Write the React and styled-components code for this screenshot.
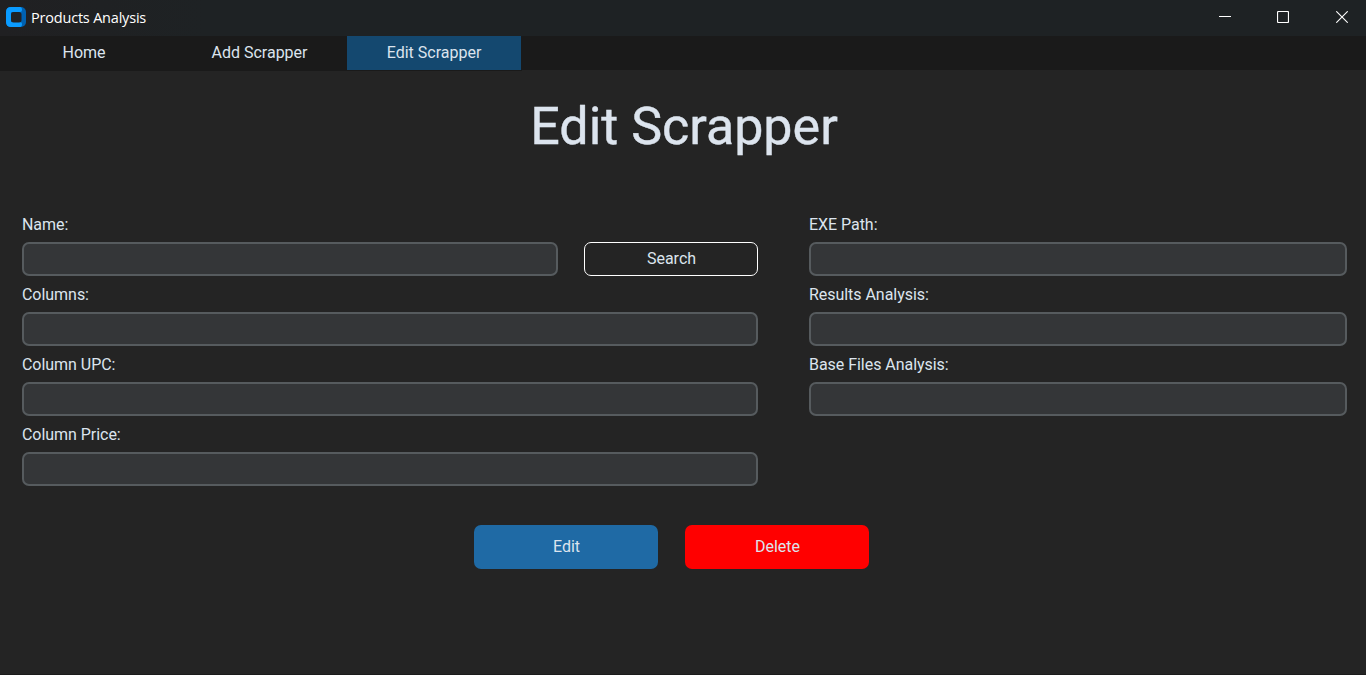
import React from 'react';
import styled, { createGlobalStyle } from 'styled-components';

const GlobalStyle = createGlobalStyle`
  * { box-sizing: border-box; }
  body { margin: 0; background: #242424; overflow: hidden; }
  button, input { font: inherit; margin: 0; padding: 0; }
`;

const Window = styled.div`
  display: flex;
  flex-direction: column;
  height: 675px;
  background: #242424;
  border-bottom: 1px solid #1b1b1b;
  color: #dce4ee;
  font: 16px/20px Roboto, sans-serif;
`;

const TitleBar = styled.header`
  display: flex;
  align-items: center;
  height: 36px;
  padding: 0 18px 2px 6px;
  background: linear-gradient(90deg, #202022, #1e2224 15%, #1e2224);
`;

const WindowTitle = styled.span`
  flex: 1;
  margin-left: 5px;
  padding-top: 1px;
  color: #fff;
  font-family: 'Open Sans', sans-serif;
  font-size: 14.5px;
  letter-spacing: -0.2px;
`;

const WindowControls = styled.div`
  display: flex;
  gap: 46px;
  svg { display: block; }
  svg:last-child { margin-left: 1px; }
`;

const Nav = styled.nav`
  display: flex;
  height: 34px;
  background: #1a1a1a;
`;

const TabGroup = styled.div`
  display: flex;
  height: 35px;
  width: 522px;
  background: #1a1a1a;
`;

const Tab = styled.button`
  width: ${(p) => p.$width}px;
  height: 34px;
  padding: ${(p) => p.$pad || '0'};
  border: 0;
  background: ${(p) => (p.$active ? '#14486f' : 'transparent')};
  color: #dce4ee;
`;

const Heading = styled.h1`
  margin: 27px 0 0;
  padding-left: 2px;
  font-size: 52px;
  line-height: 60px;
  font-weight: 400;
  text-align: center;
  -webkit-text-stroke: 0.4px #dce4ee;
`;

const Form = styled.form`
  display: grid;
  grid-template-columns: 736px 538px;
  column-gap: 51px;
  padding: 49px 0 0 22px;
`;

const Column = styled.div`
  display: flex;
  flex-direction: column;
`;

const Label = styled.label`
  display: flex;
  flex-direction: column;
  flex: 1;
`;

const Caption = styled.span`
  height: 36px;
  line-height: 38px;
  letter-spacing: -0.04px;
`;

const Input = styled.input`
  width: 100%;
  height: 34px;
  padding: 0 8px;
  border: 2px solid #565b5e;
  border-radius: 7px;
  background: #343638;
  color: #dce4ee;
  outline: 0;
`;

const SearchRow = styled.div`
  display: flex;
  align-items: flex-end;
  gap: 26px;
`;

const SearchButton = styled.button`
  width: 174px;
  height: 34px;
  padding: 0 0 1px 1px;
  border: 1px solid #fff;
  border-radius: 7px;
  background: transparent;
  color: #dce4ee;
`;

const Actions = styled.div`
  display: flex;
  gap: 27px;
  padding: 39px 0 0 474px;
`;

const ActionButton = styled.button`
  width: 184px;
  height: 44px;
  padding: 0 0 1px 1px;
  border: 0;
  border-radius: 7px;
  background: ${(p) => (p.$danger ? '#ff0000' : '#1f6aa5')};
  color: #dce4ee;
`;

function AppLogo() {
  return (
    <svg width="20" height="20" viewBox="0 0 20 20">
      <rect width="20" height="20" rx="5" fill="#0061b0" />
      <path d="M5 0H14Q16 0 16 3Q16 5 14 5H6Q5 5 5 6V14Q5 15 6 15H14Q16 15 16 17Q16 20 14 20H5Q0 20 0 15V5Q0 0 5 0Z" fill="#0a9bff" />
      <rect x="5" y="5" width="10.5" height="10.5" rx="2.5" fill="#202123" />
    </svg>
  );
}

function Field({ label }) {
  return (
    <Label>
      <Caption>{label}</Caption>
      <Input />
    </Label>
  );
}

export default function App() {
  return (
    <>
      <GlobalStyle />
      <Window>
        <TitleBar>
          <AppLogo />
          <WindowTitle>Products Analysis</WindowTitle>
          <WindowControls>
            <svg width="12" height="12" viewBox="0 0 12 12"><path d="M0 5.5H12" stroke="#fff" /></svg>
            <svg width="12" height="12" viewBox="0 0 12 12"><rect x=".5" y=".5" width="11" height="11" rx="1" fill="none" stroke="#fff" strokeWidth="1.2" /></svg>
            <svg width="12" height="12" viewBox="0 0 12 12"><path d="M.3 .3 11.7 11.7M11.7 .3 .3 11.7" stroke="#fff" strokeWidth="1.1" /></svg>
          </WindowControls>
        </TitleBar>
        <Nav>
          <TabGroup>
            <Tab $width={172} $pad="0 4px 0 0">Home</Tab>
            <Tab $width={175}>Add Scrapper</Tab>
            <Tab $width={174} $active>Edit Scrapper</Tab>
          </TabGroup>
        </Nav>
        <Heading>Edit Scrapper</Heading>
        <Form>
          <Column>
            <SearchRow>
              <Field label="Name:" />
              <SearchButton type="button">Search</SearchButton>
            </SearchRow>
            <Field label="Columns:" />
            <Field label="Column UPC:" />
            <Field label="Column Price:" />
          </Column>
          <Column>
            <div><Field label="EXE Path:" /></div>
            <div><Field label="Results Analysis:" /></div>
            <div><Field label="Base Files Analysis:" /></div>
          </Column>
        </Form>
        <Actions>
          <ActionButton>Edit</ActionButton>
          <ActionButton $danger>Delete</ActionButton>
        </Actions>
      </Window>
    </>
  );
}
